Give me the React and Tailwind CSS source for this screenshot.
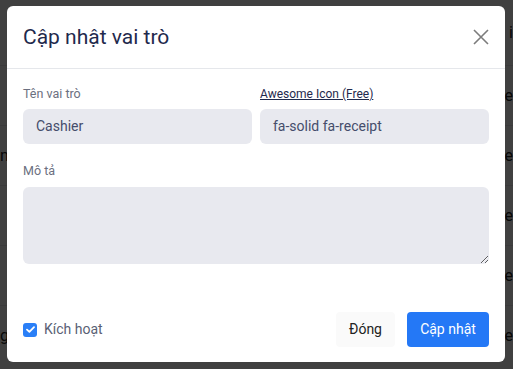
import React from 'react';

const rows = [
  { left: '', right: 'i' },
  { left: '', right: 'e' },
  { left: 'n', right: 'e' },
  { left: '', right: 'e' },
  { left: '', right: 'e' },
  { left: 'g', right: 'e' },
];

const Backdrop = () => (
  <div className="flex flex-col" style={{ fontFamily: 'Roboto, sans-serif' }}>
    {rows.map((row, i) => (
      <div
        key={i}
        className={`flex items-center justify-between text-[16px] text-[#222] ${i === 0 ? 'h-[65px]' : 'h-[60px] border-t border-gray-200'}`}
      >
        <span>{row.left}</span>
        <span>{row.right}</span>
      </div>
    ))}
  </div>
);

const App = () => {
  return (
    <div
      className="relative w-[513px] h-[369px] overflow-hidden bg-white"
      style={{ fontFamily: 'Roboto, "Noto Sans", sans-serif' }}
    >
      <Backdrop />
      <div className="absolute inset-0 bg-black/75" />

      <div className="absolute left-[7px] top-[6px] w-[498px] h-[356px] bg-white rounded-md flex flex-col">
        <div className="h-[63px] flex items-center justify-between px-4 border-b border-gray-200">
          <h2 className="text-[21px] text-[#1f2a4d] leading-none">Cập nhật vai trò</h2>
          <button className="w-[20px] h-[20px] flex items-center justify-center text-[#7c7c7c] mr-[-2px]">
            <svg width="18" height="18" viewBox="0 0 18 18" fill="none" stroke="currentColor" strokeWidth="1.6">
              <path d="M2 2 L16 16 M16 2 L2 16" />
            </svg>
          </button>
        </div>

        <div className="flex flex-col px-4 pt-[17px]">
          <div className="grid grid-cols-2 gap-x-2">
            <div className="flex flex-col">
              <label className="text-[12.5px] leading-4 text-[#6b7080]">Tên vai trò</label>
              <div className="mt-[7px] h-[35px] rounded-md bg-[#e8e9ef] flex items-center px-[13px] text-[14px] text-[#454d6b]">
                Cashier
              </div>
            </div>
            <div className="flex flex-col">
              <a className="text-[12px] leading-4 text-[#1f2a4d] underline self-start">Awesome Icon (Free)</a>
              <div className="mt-[7px] h-[35px] rounded-md bg-[#e8e9ef] flex items-center px-[13px] text-[14px] text-[#454d6b]">
                fa-solid fa-receipt
              </div>
            </div>
          </div>

          <label className="mt-[19px] text-[12.5px] leading-4 text-[#6b7080]">Mô tả</label>
          <textarea className="mt-[8px] h-[77px] rounded-md bg-[#e8e9ef] outline-none px-[13px] py-2 text-[14px]" />
        </div>

        <div className="mt-auto flex items-center justify-between px-4 pb-[15px]">
          <label className="flex items-center gap-[7px] text-[14px] text-[#5a5f75]">
            <span className="w-[14px] h-[14px] rounded-[3px] bg-[#2a7ff7] flex items-center justify-center">
              <svg width="9" height="7" viewBox="0 0 9 7" fill="none" stroke="white" strokeWidth="1.8" strokeLinecap="round" strokeLinejoin="round">
                <path d="M1 3.6 L3.4 5.8 L8 1.2" />
              </svg>
            </span>
            Kích hoạt
          </label>
          <div className="flex items-center gap-3">
            <button className="h-[35px] w-[59px] rounded bg-[#fafafa] text-[14px] text-[#222]">Đóng</button>
            <button className="h-[35px] w-[82px] rounded bg-[#2478f6] text-[14px] text-white">Cập nhật</button>
          </div>
        </div>
      </div>
    </div>
  );
};

export default App;
